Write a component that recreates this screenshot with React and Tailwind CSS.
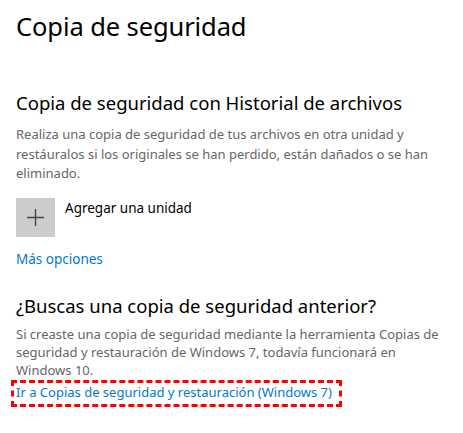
export default function App() {
  const font = { fontFamily: '"Noto Sans", "Open Sans", sans-serif' };
  return (
    <div className="w-[463px] h-[433px] bg-white overflow-hidden px-4" style={font}>
      <h1 className="text-[25.5px] leading-[34px] pt-[9px] text-black font-normal tracking-[-0.1px]">Copia de seguridad</h1>
      <h2 className="mt-[47px] text-[18.5px] leading-[26px] text-black font-normal">Copia de seguridad con Historial de archivos</h2>
      <p className="mt-[9px] text-[13px] leading-[19.5px] text-[#666666]">
        Realiza una copia de seguridad de tus archivos en otra unidad y restáuralos si los originales se han perdido, están dañados o se han eliminado.
      </p>
      <div className="mt-[14px] flex items-start gap-[10px]">
        <div className="w-[39px] h-[39px] bg-[#cccccc] flex items-center justify-center">
          <svg width="17" height="17" viewBox="0 0 17 17">
            <path d="M8.5 0V17M0 8.5H17" stroke="#444" strokeWidth="1.4" />
          </svg>
        </div>
        <span className="text-[13.5px] leading-[20px] text-black">Agregar una unidad</span>
      </div>
      <div className="mt-[12px] text-[13.5px] leading-[20px] text-[#0078d7]">Más opciones</div>
      <h2 className="mt-[24px] text-[18.5px] leading-[26px] text-black font-normal">¿Buscas una copia de seguridad anterior?</h2>
      <p className="mt-[6px] text-[13px] leading-[18px] text-[#666666]">
        Si creaste una copia de seguridad mediante la herramienta Copias de seguridad y restauración de Windows 7, todavía funcionará en Windows 10.
      </p>
      <div className="-ml-[5px] mt-[1px] w-[331px] border-[3px] border-dashed border-[#ff0000] pl-[2px] h-[27px] flex items-start">
        <span className="text-[13px] leading-[18px] text-[#0078d7] whitespace-nowrap">Ir a Copias de seguridad y restauración (Windows 7)</span>
      </div>
    </div>
  );
}
